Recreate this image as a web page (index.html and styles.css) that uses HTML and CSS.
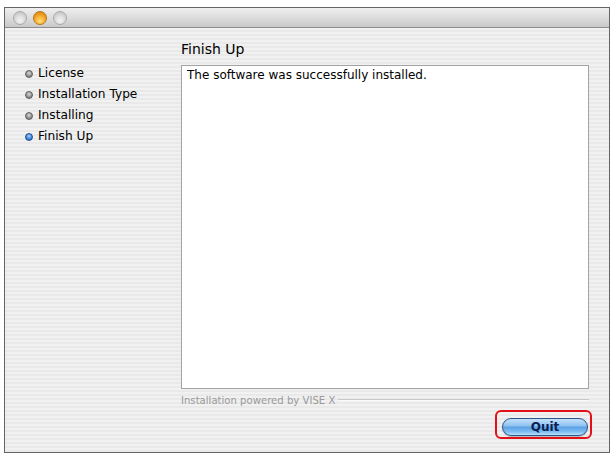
FILE: index.html
```html
<!DOCTYPE html>
<html>
<head>
<meta charset="utf-8">
<title>Installer</title>
<link rel="stylesheet" href="styles.css">
</head>
<body>
<div class="window">
  <div class="titlebar">
    <span class="light light-gray"></span>
    <span class="light light-orange"></span>
    <span class="light light-gray"></span>
  </div>
  <div class="content">
    <ul class="steps">
      <li class="step"><span class="dot"></span>License</li>
      <li class="step"><span class="dot"></span>Installation Type</li>
      <li class="step"><span class="dot"></span>Installing</li>
      <li class="step current"><span class="dot"></span>Finish Up</li>
    </ul>
    <div class="main">
      <h1 class="heading">Finish Up</h1>
      <div class="box">The software was successfully installed.</div>
      <div class="powered"><span class="powered-text">Installation powered by VISE X</span><span class="rule"></span></div>
      <div class="actions">
        <div class="highlight"><button class="quit">Quit</button></div>
      </div>
    </div>
  </div>
</div>
</body>
</html>
```
FILE: styles.css
```css
html, body {
  margin: 0;
  padding: 0;
  background: #ffffff;
}
body {
  font-family: "DejaVu Sans", "Liberation Sans", sans-serif;
  color: #000;
}
.window {
  margin: 7px 0 0 4px;
  width: 604px;
  height: 444px;
  border: 1px solid #656565;
  display: flex;
  flex-direction: column;
  background: repeating-linear-gradient(to bottom, #f1f1f1 0, #f1f1f1 2px, #e9e9e9 2px, #e9e9e9 4px);
}
.titlebar {
  height: 19px;
  border-bottom: 1px solid #8c8c8c;
  background: linear-gradient(to bottom, #eeeeee 0%, #dddddd 50%, #c9c9c9 100%);
  display: flex;
  align-items: center;
  gap: 6px;
  padding-left: 8px;
}
.light {
  width: 14px;
  height: 14px;
  border-radius: 50%;
  box-sizing: border-box;
}
.light-gray {
  border: 1px solid #a9a9a9;
  background: radial-gradient(circle at 50% 70%, #f4f4f4 0%, #d6d6d6 55%, #bdbdbd 100%);
}
.light-orange {
  border: 1px solid #b87412;
  background: radial-gradient(circle at 50% 75%, #ffe07a 0%, #f4a829 50%, #d07c10 100%);
}
.content {
  flex: 1;
  display: grid;
  grid-template-columns: 176px 1fr;
}
.steps {
  list-style: none;
  margin: 0;
  padding: 35px 0 0 20px;
  font-size: 12.2px;
}
.step {
  display: flex;
  align-items: center;
  height: 21px;
  line-height: 21px;
}
.dot {
  width: 8px;
  height: 8px;
  border-radius: 50%;
  margin-right: 5px;
  box-sizing: border-box;
  border: 1px solid #5e5e5e;
  background: radial-gradient(circle at 50% 35%, #d8d8d8 0%, #8e8e8e 60%, #6e6e6e 100%);
}
.current .dot {
  border-color: #1d4f8f;
  background: radial-gradient(circle at 50% 35%, #a8d2ff 0%, #3b82d6 60%, #1f5fae 100%);
}
.main {
  display: flex;
  flex-direction: column;
  padding: 12px 20px 0 0;
}
.heading {
  margin: 0 0 7px 0;
  font-size: 14px;
  font-weight: normal;
  line-height: 18px;
  height: 18px;
}
.box {
  height: 306px;
  border: 1px solid #a3a3a3;
  background: #ffffff;
  padding: 2px 5px 14px 5px;
  font-size: 12px;
  line-height: 15px;
}
.powered {
  margin-top: 4px;
  display: flex;
  align-items: center;
  height: 14px;
}
.powered-text {
  font-size: 10.1px;
  color: #9a9a9a;
  white-space: nowrap;
  margin-right: 3px;
}
.rule {
  flex: 1;
  height: 0;
  border-top: 1px solid #c8c8c8;
  border-bottom: 1px solid #fafafa;
}
.actions {
  display: flex;
  justify-content: flex-end;
  margin-top: 3px;
  margin-right: -3px;
}
.highlight {
  box-sizing: border-box;
  width: 97px;
  height: 29px;
  border: 2px solid #e3101a;
  border-radius: 6px;
  padding: 4px 2px 0 5px;
}
.quit {
  width: 86px;
  height: 18px;
  padding: 0;
  border: 1px solid #2f5488;
  border-radius: 9px;
  font-family: "DejaVu Sans", sans-serif;
  font-size: 12px;
  font-weight: bold;
  color: #0b2150;
  line-height: 16px;
  background: linear-gradient(to bottom, #c4e0fb 0%, #93c5f2 40%, #5ea2e6 52%, #7fbdf3 80%, #b8e2ff 100%);
  box-shadow: 0 1px 1px rgba(0,0,0,0.25);
}
```
